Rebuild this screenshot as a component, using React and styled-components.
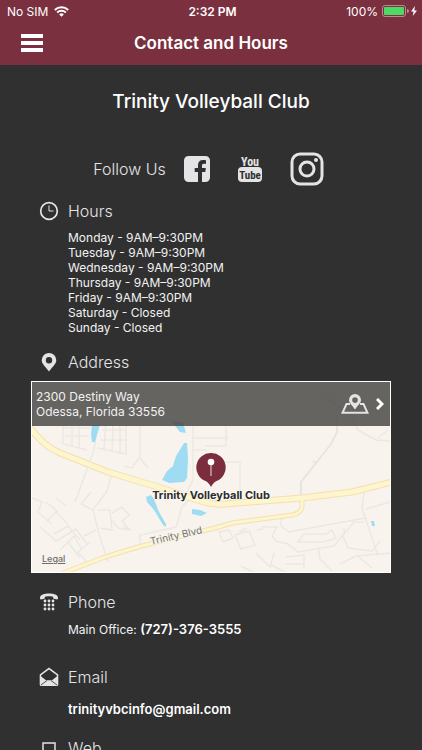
import styled, { createGlobalStyle } from "styled-components";

const hours = [
  "Monday - 9AM–9:30PM",
  "Tuesday - 9AM–9:30PM",
  "Wednesday - 9AM–9:30PM",
  "Thursday - 9AM–9:30PM",
  "Friday - 9AM–9:30PM",
  "Saturday - Closed",
  "Sunday - Closed",
];

function StatusBar() {
  return (
    <Status>
      <StatusSide>
        <span>No SIM</span>
        <svg width="15" height="11" viewBox="0 0 15 11" fill="currentColor">
          <path d="M7.5 10.8 5.2 8.4a3.3 3.3 0 0 1 4.6 0z" />
          <g fill="none" stroke="currentColor" strokeWidth="1.9">
            <path d="M3.2 6.5a6.1 6.1 0 0 1 8.6 0" />
            <path d="M.8 4a9.5 9.5 0 0 1 13.4 0" />
          </g>
        </svg>
      </StatusSide>
      <Clock>2:32 PM</Clock>
      <StatusSide $end>
        <span>100%</span>
        <svg width="36" height="12" viewBox="0 0 36 12">
          <rect x=".5" y=".5" width="23" height="11" rx="2.5" fill="none" stroke="#b98a92" />
          <rect x="2" y="2" width="20" height="8" rx="1" fill="#4cd964" />
          <path d="M25 4v4a2 2 0 0 0 0-4z" fill="#b98a92" />
          <path d="M33 1l-4 5.5h2.6L30.7 11l4.3-5.6h-2.7z" fill="#fff" />
        </svg>
      </StatusSide>
    </Status>
  );
}

function MapDrawing() {
  return (
    <MapSvg viewBox="0 0 358 190" preserveAspectRatio="xMidYMid slice">
      <rect width="358" height="190" fill="#f8f4ed" />
      <g fill="none" stroke="#ebe8e3" strokeWidth="1.5">
        <path d="M31 38v24l24 6M31 46h28M33 54h24M40 38v26M47 38v28M66 38l-4 30-19 52M68 38h26v34l-28-6M74 38l-2 30M81 38l-1 32M88 38v34M70 48h24M68 58h26" />
        <path d="M108 38v36l-8 12-8-2M108 76l8 10M161 38v60l-6 12M161 56h14M161 68h14" />
        <path d="M80 91l-5 18-14 19 6 24 9 28M61 128l-12-6 10-12M66 128h12l2 20-12-2M80 131l10-6 7 8-7 6 8 9-12-2-6-8M97 148l-6-4" />
        <path d="M0 116l10 4-4 10 14 12M14 120l12 10M24 116l10 8M14 140l10-10 12 12M8 145l16 14 20-12 12 16M22 152l14-8 12 14M28 168l14-14 8 14M36 160l12 16M58 160l-12 10 12 14M64 148l-12 6" />
        <path d="M108 165v-12l36-8 6-20 14-14M173 56h22l-1-8M173 64h21M194 40v24M190 80h18v36" />
        <path d="M216 0v6h24V0M290 0l12 22 18 12 6 14 18 10 14 1M284 8l20 10M290 14l22 14M346 56l10-8" />
        <path d="M305 36v14l-6 12-30 38v14M281 79l4 3" stroke="#e8e5e1" strokeWidth="2" />
        <path d="M332 110l-2 16 16 48M334 127l24-7M249 136v8l8 6 76-14M229 145h16l-5 9 4 5 12 3 10 8 36-6 10-12v-6M225 148l6-1M266 160l6-8h22l6-4 4 8-12 4zM187 150l10-2 4 8-10 4zM203 153l14-4 6 14-14 4zM207 150l8-4M312 152l10-12h10M310 152l6 14 24 3 8-10M308 182l16-8 34-3M326 174l14 12M224 171l14 14 4-14M239 183l14 7M254 175l18-2v14M253 182h18M286 165l2 12 12 12M209 184l12 6" />
      </g>
      <g fill="#9fdcf4">
        <path d="M60 43h8l-3 10-2 7h-3l-1-7z" />
        <path d="M139 39l12 1 3 11-6-1z" />
        <path d="M152 61l3 0 1 16-1 19-3 4-15 1-7-3 5-9 6-5 3-10 5-8z" />
        <path d="M114 115l5-2 3 4 5 13 7 12v3l-3-2-9-15-7-8z" />
        <path d="M160 127l8 1 7 3-6 3-9-2z" />
        <path d="M339 139l3 0 1 5h-3z" />
      </g>
      <g fill="none" strokeLinejoin="round">
        <path d="M31 191l42-16 33-10 77-19 17-5 60-8q10-2 10-9v-8" stroke="#f3dfb4" strokeWidth="5" />
        <path d="M-2 46q16 20 30 25l48 19 50 15 43 14q12 4 24 3l77-6 50-6 40-10" stroke="#f3dfb4" strokeWidth="7" />
        <path d="M31 191l42-16 33-10 77-19 17-5 60-8q10-2 10-9v-8" stroke="#fdf5cc" strokeWidth="3" />
        <path d="M-2 46q16 20 30 25l48 19 50 15 43 14q12 4 24 3l77-6 50-6 40-10" stroke="#fdf5cc" strokeWidth="5" />
      </g>
      <RoadName x="119" y="163" transform="rotate(-13 119 163)">
        Trinity Blvd
      </RoadName>
    </MapSvg>
  );
}

function App() {
  return (
    <Screen>
      <GlobalStyle />
      <Header>
        <StatusBar />
        <NavBar>
          <MenuButton aria-label="Menu">
            <svg width="22" height="18" viewBox="0 0 22 18" fill="currentColor">
              <path d="M0 0h22v4H0zM0 7h22v4H0zM0 14h22v4H0z" />
            </svg>
          </MenuButton>
          <PageTitle>Contact and Hours</PageTitle>
        </NavBar>
      </Header>
      <Main>
        <ClubName>Trinity Volleyball Club</ClubName>
        <Follow>
          <FollowText>Follow Us</FollowText>
          <SocialLink href="#facebook" aria-label="Facebook">
            <svg width="26" height="26" viewBox="0 0 26 26" fill="currentColor">
              <path d="M4.5 0h17A4.5 4.5 0 0 1 26 4.5v17a4.500 4.500 0 0 1-4.500 4.500H18V16h3.300l.5-4H18V9.700c0-1.200.4-1.900 2-1.900h2V4.200c-.4 0-1.600-.2-3-.2-3 0-5 1.800-5 5.100V12h-3.300v4H14v10H4.500A4.500 4.500 0 0 1 0 21.500v-17A4.500 4.500 0 0 1 4.500 0z" />
            </svg>
          </SocialLink>
          <SocialLink href="#youtube" aria-label="YouTube">
            <svg width="24" height="26" viewBox="0 0 24 26">
              <LogoText x="12" y="10" $size={12} fill="currentColor">
                You
              </LogoText>
              <rect y="11" width="24" height="15" rx="4" fill="currentColor" />
              <LogoText x="12" y="23" $size={11} fill="#303030">
                Tube
              </LogoText>
            </svg>
          </SocialLink>
          <SocialLink href="#instagram" aria-label="Instagram">
            <svg width="34" height="34" viewBox="0 0 34 34" fill="none" stroke="currentColor">
              <rect x="2" y="2" width="30" height="30" rx="8" strokeWidth="3" />
              <circle cx="17" cy="17" r="7" strokeWidth="3" />
              <circle cx="26" cy="8" r="2" fill="currentColor" stroke="none" />
            </svg>
          </SocialLink>
        </Follow>

        <Section>
          <SectionTitle>
            <svg width="20" height="20" viewBox="0 0 20 20" fill="none" stroke="currentColor">
              <circle cx="10" cy="10" r="8.3" strokeWidth="1.7" />
              <path d="M10 4.5V10h4.5" />
            </svg>
            Hours
          </SectionTitle>
          <HoursList>
            {hours.map((line) => (
              <li key={line}>{line}</li>
            ))}
          </HoursList>
        </Section>

        <Section>
          <SectionTitle>
            <svg width="20" height="20" viewBox="0 0 20 20" fill="currentColor">
              <path
                fillRule="evenodd"
                d="M10 1a7.300 7.300 0 0 1 7.300 7.200c0 3.800-4.300 6.800-7.300 11.300C7 15 2.700 12 2.700 8.200A7.300 7.300 0 0 1 10 1zm0 4a3.200 3.200 0 1 0 0 6.400A3.200 3.200 0 0 0 10 5z"
              />
            </svg>
            Address
          </SectionTitle>
          <MapCard>
            <MapDrawing />
            <AddressLink href="#directions">
              <Address>
                2300 Destiny Way
                <br />
                Odessa, Florida 33556
              </Address>
              <svg width="28" height="20" viewBox="0 0 28 20" fill="none" stroke="currentColor">
                <path d="M9 10H5.500L1.500 18.800h25L22.500 10H19" strokeWidth="2" />
                <path
                  d="M14 0a6 6 0 0 1 6 5.900c0 3.200-3.500 5.500-6 9.600-2.500-4.100-6-6.400-6-9.600A6 6 0 0 1 14 0zm0 3.300a2.800 2.800 0 1 0 0 5.600 2.800 2.800 0 0 0 0-5.600z"
                  fill="currentColor"
                  fillRule="evenodd"
                  stroke="none"
                />
              </svg>
              <svg width="8" height="12" viewBox="0 0 8 12" fill="none" stroke="#fff" strokeWidth="3">
                <path d="M1 1l5 5-5 5" />
              </svg>
            </AddressLink>
            <Marker>
              <svg width="30" height="35" viewBox="0 0 30 35">
                <path d="M15 0a14.500 14.500 0 0 1 5.500 28c-2.500 1.200-4 3.300-5.500 6-1.500-2.700-3-4.800-5.500-6A14.500 14.500 0 0 1 15 0z" fill="#7b2d3e" />
                <path d="M15 9v14" stroke="#c9a3ab" strokeWidth="1.5" />
                <circle cx="15" cy="9" r="3.3" fill="#fff" />
              </svg>
              <span>Trinity Volleyball Club</span>
            </Marker>
            <LegalLink href="#legal">Legal</LegalLink>
          </MapCard>
        </Section>

        <Section $gap={19}>
          <SectionTitle>
            <svg width="20" height="20" viewBox="0 0 20 20" fill="currentColor">
              <path d="M10 1.500c4.500 0 9 1.300 9 4.300 0 1-.3 1.700-.8 1.700l-3.400-.7c-.7-.2-.6-1.600-.9-2-1.400-.7-6.400-.7-7.800 0-.3.4-.2 1.800-.9 2l-3.400.7C1.300 7.500 1 6.800 1 5.800c0-3 4.500-4.300 9-4.300z" />
              {[9, 13, 17].map((y) =>
                [6, 10, 14].map((x) => (
                  <circle key={`${x}-${y}`} cx={x} cy={y} r="1.4" />
                ))
              )}
            </svg>
            Phone
          </SectionTitle>
          <Detail>
            Main Office: <ContactLink href="tel:7273763555">(727)-376-3555</ContactLink>
          </Detail>
        </Section>

        <Section $gap={28}>
          <SectionTitle>
            <svg width="20" height="20" viewBox="0 0 20 20">
              <path
                d="M10 .5 19.300 7.500V17.500a1.500 1.500 0 0 1-1.500 1.500H2.200A1.500 1.500 0 0 1 .7 17.500V7.500zM10 2.400 2.200 8.300v1.200L7 13.200h6l4.800-3.700V8.300z"
                fill="currentColor"
                fillRule="evenodd"
              />
              <path d="M2 18l6-4.500M18 18l-6-4.500" stroke="#303030" strokeWidth=".8" />
            </svg>
            Email
          </SectionTitle>
          <Detail $gap={14}>
            <ContactLink href="mailto:trinityvbcinfo@gmail.com">trinityvbcinfo@gmail.com</ContactLink>
          </Detail>
        </Section>

        <Section $gap={19}>
          <SectionTitle>
            <svg width="20" height="20" viewBox="0 0 20 20" fill="none" stroke="currentColor">
              <path d="M4 16V5h12v11z" strokeWidth="1.5" />
              <path d="M1 18h18" strokeWidth="1.5" />
            </svg>
            Web
          </SectionTitle>
        </Section>
      </Main>
    </Screen>
  );
}

export default App;

const GlobalStyle = createGlobalStyle`
  * {
    box-sizing: border-box;
  }
  body {
    margin: 0;
    background-color: #303030;
    font-family: Inter, "Liberation Sans", sans-serif;
    color: #f2f2f2;
  }
  svg {
    display: block;
    flex-shrink: 0;
  }
`;
const Screen = styled.div`
  display: flex;
  flex-direction: column;
  height: 100vh;
`;
const Header = styled.header`
  padding-bottom: 2px;
  background-color: #7b3040;
  color: #ffffff;
`;
const Status = styled.div`
  display: grid;
  grid-template-columns: 1fr auto 1fr;
  align-items: center;
  height: 22px;
  padding: 0 4px 0 7px;
  font-size: 12px;
`;
const StatusSide = styled.div`
  display: flex;
  align-items: center;
  justify-content: ${(props) => (props.$end ? "flex-end" : "flex-start")};
  gap: ${(props) => (props.$end ? "4px" : "6px")};
`;
const Clock = styled.span`
  font-weight: 600;
`;
const NavBar = styled.div`
  display: grid;
  grid-template-columns: 44px 1fr 44px;
  align-items: center;
  height: 41px;
  padding: 0 10px;
`;
const MenuButton = styled.button`
  display: flex;
  justify-content: center;
  padding: 8px 0;
  border: none;
  background: none;
  color: inherit;
  cursor: pointer;
`;
const PageTitle = styled.h1`
  margin: 0;
  font-size: 17px;
  font-weight: 600;
  text-align: center;
`;
const Main = styled.main`
  flex: 1;
  min-height: 0;
  padding: 25px 31px;
  overflow-y: auto;
  scrollbar-width: none;
`;
const ClubName = styled.h2`
  margin: 0;
  font-size: 19px;
  font-weight: 500;
  line-height: 24px;
  text-align: center;
  color: #ffffff;
`;
const Follow = styled.div`
  display: flex;
  align-items: center;
  justify-content: center;
  height: 34px;
  margin: 38px 0 15px;
  padding-right: 5px;
  color: #e4e4e6;
`;
const FollowText = styled.span`
  font-size: 16px;
  font-weight: 300;
  margin-right: 18px;
`;
const SocialLink = styled.a`
  display: flex;
  color: inherit;
  & + & {
    margin-left: 28px;
  }
`;
const LogoText = styled.text`
  font-family: "Liberation Sans Narrow", "Roboto Condensed", Roboto, sans-serif;
  font-size: ${(props) => props.$size}px;
  font-weight: 700;
  text-anchor: middle;
`;
const Section = styled.section`
  margin-top: ${(props) => props.$gap || 17}px;
  ${Follow} + & {
    margin-top: 0;
  }
`;
const SectionTitle = styled.h3`
  display: flex;
  align-items: center;
  gap: 9px;
  margin: 0 0 9px;
  padding-left: 8px;
  font-size: 16px;
  font-weight: 300;
  line-height: 20px;
  color: #e4e4e6;
`;
const HoursList = styled.ul`
  margin: 0;
  padding: 0 0 0 37px;
  list-style: none;
  font-size: 12px;
  line-height: 15px;
`;
const MapCard = styled.div`
  position: relative;
  border: 1px solid #ffffff;
`;
const MapSvg = styled.svg`
  width: 100%;
  height: auto;
`;
const RoadName = styled.text`
  font-size: 10px;
  fill: #77746f;
  stroke: #f8f4ed;
  stroke-width: 2px;
  paint-order: stroke;
`;
const AddressLink = styled.a`
  position: absolute;
  top: 0;
  left: 0;
  right: 0;
  display: flex;
  align-items: center;
  gap: 7px;
  height: 44px;
  padding: 0 6px 0 4px;
  background-color: rgba(70, 68, 65, 0.82);
  color: #e4e4e6;
  text-decoration: none;
`;
const Address = styled.address`
  flex: 1;
  font-size: 12px;
  font-style: normal;
  line-height: 15px;
  color: #f2f2f2;
`;
const Marker = styled.div`
  position: absolute;
  top: 71px;
  left: 0;
  right: 0;
  display: flex;
  flex-direction: column;
  align-items: center;
  font-size: 11px;
  font-weight: 700;
  line-height: 15px;
  color: #2c2c2c;
  text-shadow: 0 0 2px #ffffff, 0 0 2px #ffffff;
`;
const LegalLink = styled.a`
  position: absolute;
  left: 10px;
  bottom: 6px;
  font-size: 9px;
  font-weight: 500;
  line-height: 14px;
  color: #6f6d6a;
`;
const Detail = styled.p`
  margin: ${(props) => props.$gap || 8}px 0 0;
  padding-left: 37px;
  font-size: 12px;
  line-height: 18px;
`;
const ContactLink = styled.a`
  font-size: 13px;
  font-weight: 600;
  line-height: 1;
  color: #ffffff;
  text-decoration: none;
`;
